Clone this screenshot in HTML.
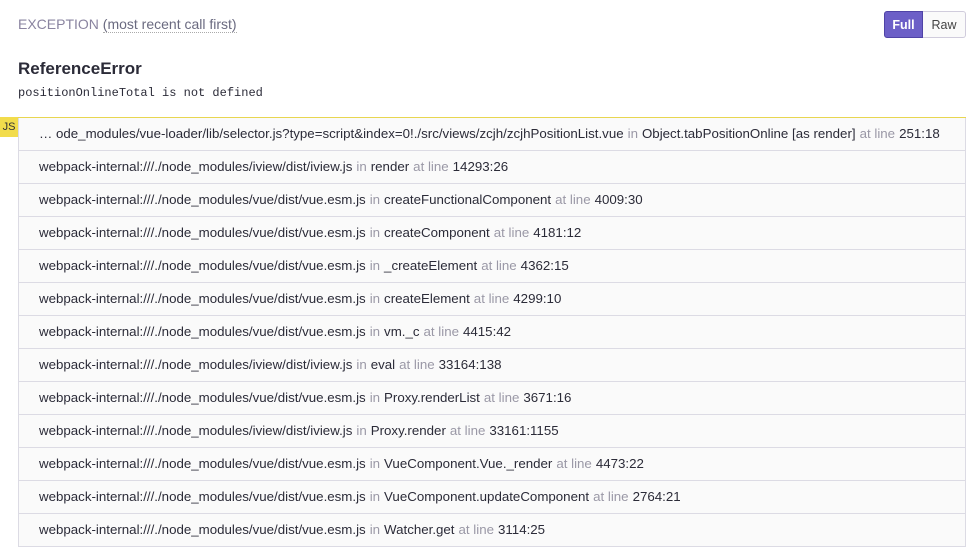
<!DOCTYPE html>
<html><head><meta charset="utf-8"><style>
body{margin:0;background:#fff;font-family:"Liberation Sans",sans-serif;width:967px;height:548px;overflow:hidden;position:relative}
.hdr{position:absolute;left:18px;top:16px;font-size:14px;color:#8a84a0}
.hdr b{font-weight:normal;color:#8a84a0}
.hdr span{color:#6a6a80;border-bottom:1px dotted #aaa}
.btns{position:absolute;left:884px;top:11px;display:flex;font-size:12.5px}
.btns div{height:27px;line-height:27px;box-sizing:border-box}
.full{width:39px;background:#6c5fc7;color:#fff;font-weight:bold;text-align:center;border:1px solid #4f43a6;border-radius:3px 0 0 3px}
.raw{width:43px;background:#fafafa;color:#444;text-align:center;border:1px solid #d0ccdc;border-left:none;border-radius:0 3px 3px 0}
h1{position:absolute;left:18px;top:59px;margin:0;font-size:17px;color:#2b2b38;font-weight:bold}
.msg{position:absolute;left:18px;top:86px;font-family:"Liberation Mono",monospace;font-size:12px;color:#2b2b38}
.js{position:absolute;left:0;top:117px;width:18px;height:20px;background:#f2dc4c;font-size:11px;color:#333;text-align:center;line-height:20px}
.list{position:absolute;left:18px;top:117px;width:948px;border-top:1px solid #e8d650}
.row{height:32px;border-bottom:1px solid #dcdbe4;border-left:1px solid #dcdbe4;border-right:1px solid #dcdbe4;background:#fafafa;font-size:13.3px;line-height:32px;padding-left:20px;color:#2b2b38;white-space:nowrap}
.g{color:#9a98a6;margin:0 4px}
</style></head><body>
<div class="hdr"><b>EXCEPTION</b> <span>(most recent call first)</span></div>
<div class="btns"><div class="full">Full</div><div class="raw">Raw</div></div>
<h1>ReferenceError</h1>
<div class="msg">positionOnlineTotal is not defined</div>
<div class="js">JS</div>
<div class="list">
<div class="row">… ode_modules/vue-loader/lib/selector.js?type=script&amp;index=0!./src/views/zcjh/zcjhPositionList.vue<span class="g">in</span>Object.tabPositionOnline [as render]<span class="g">at line</span>251:18</div>
<div class="row">webpack-internal:///./node_modules/iview/dist/iview.js<span class="g">in</span>render<span class="g">at line</span>14293:26</div>
<div class="row">webpack-internal:///./node_modules/vue/dist/vue.esm.js<span class="g">in</span>createFunctionalComponent<span class="g">at line</span>4009:30</div>
<div class="row">webpack-internal:///./node_modules/vue/dist/vue.esm.js<span class="g">in</span>createComponent<span class="g">at line</span>4181:12</div>
<div class="row">webpack-internal:///./node_modules/vue/dist/vue.esm.js<span class="g">in</span>_createElement<span class="g">at line</span>4362:15</div>
<div class="row">webpack-internal:///./node_modules/vue/dist/vue.esm.js<span class="g">in</span>createElement<span class="g">at line</span>4299:10</div>
<div class="row">webpack-internal:///./node_modules/vue/dist/vue.esm.js<span class="g">in</span>vm._c<span class="g">at line</span>4415:42</div>
<div class="row">webpack-internal:///./node_modules/iview/dist/iview.js<span class="g">in</span>eval<span class="g">at line</span>33164:138</div>
<div class="row">webpack-internal:///./node_modules/vue/dist/vue.esm.js<span class="g">in</span>Proxy.renderList<span class="g">at line</span>3671:16</div>
<div class="row">webpack-internal:///./node_modules/iview/dist/iview.js<span class="g">in</span>Proxy.render<span class="g">at line</span>33161:1155</div>
<div class="row">webpack-internal:///./node_modules/vue/dist/vue.esm.js<span class="g">in</span>VueComponent.Vue._render<span class="g">at line</span>4473:22</div>
<div class="row">webpack-internal:///./node_modules/vue/dist/vue.esm.js<span class="g">in</span>VueComponent.updateComponent<span class="g">at line</span>2764:21</div>
<div class="row">webpack-internal:///./node_modules/vue/dist/vue.esm.js<span class="g">in</span>Watcher.get<span class="g">at line</span>3114:25</div>
</div>
</body></html>
